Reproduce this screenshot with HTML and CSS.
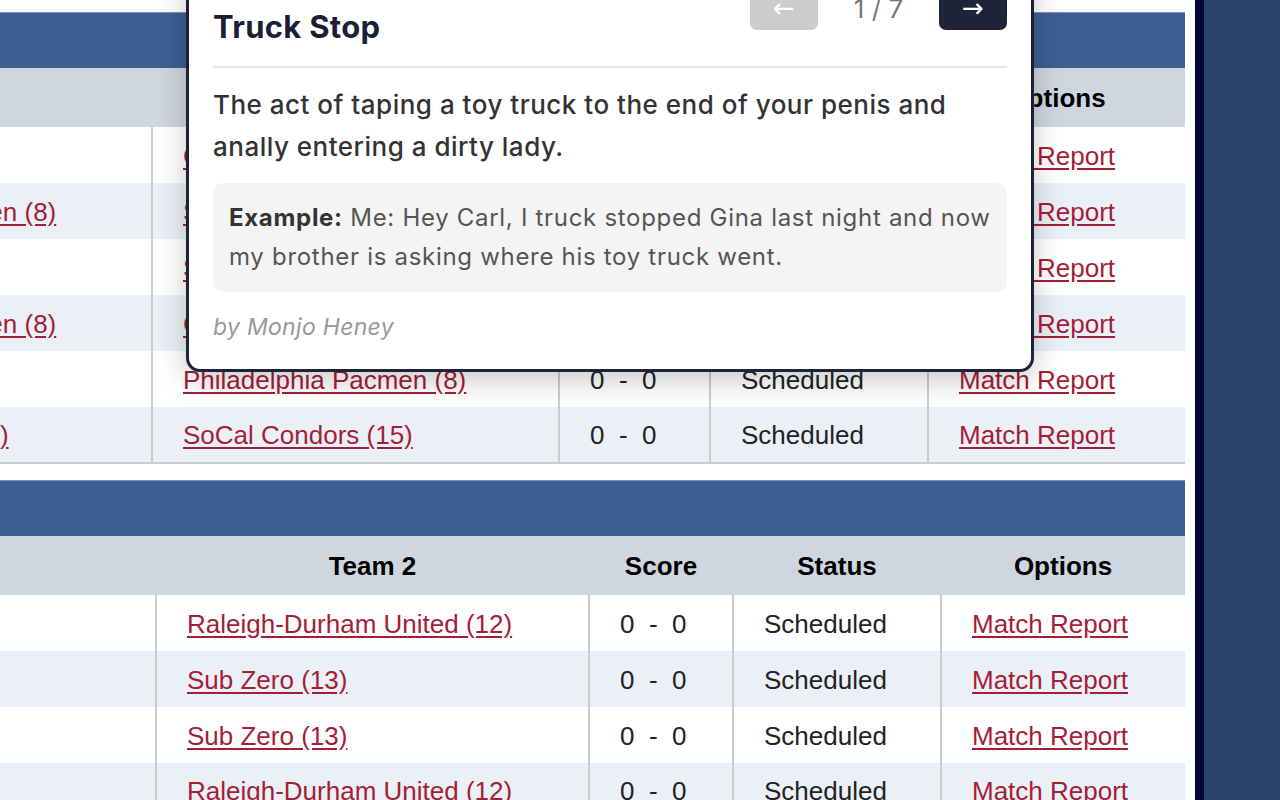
FILE: index.html
```html
<!DOCTYPE html>
<html lang="en">
<head>
<meta charset="utf-8">
<title>Schedule</title>
<link rel="stylesheet" href="styles.css">
</head>
<body>
<div class="page">
  <div class="main">
    <div class="content">
      <section class="round">
        <div class="bar"></div>
        <table class="sched sched-a">
          <colgroup><col class="c1"><col class="c2"><col class="c3"><col class="c4"><col class="c5"></colgroup>
          <thead>
            <tr><th>Team 1</th><th>Team 2</th><th>Score</th><th>Status</th><th>Options</th></tr>
          </thead>
          <tbody>
            <tr><td><a href="#">Sub Zero (13)</a></td><td><a href="#">Chicago Cyclones (10)</a></td><td>0 &nbsp;-&nbsp; 0</td><td>Scheduled</td><td><a href="#">Match Report</a></td></tr>
            <tr class="alt"><td><a href="#">Philadelphia Pacmen (8)</a></td><td><a href="#">Sub Zero (13)</a></td><td>0 &nbsp;-&nbsp; 0</td><td>Scheduled</td><td><a href="#">Match Report</a></td></tr>
            <tr><td><a href="#">Sub Zero (13)</a></td><td><a href="#">SoCal Condors (15)</a></td><td>0 &nbsp;-&nbsp; 0</td><td>Scheduled</td><td><a href="#">Match Report</a></td></tr>
            <tr class="alt"><td><a href="#">Philadelphia Pacmen (8)</a></td><td><a href="#">Chicago Cyclones (10)</a></td><td>0 &nbsp;-&nbsp; 0</td><td>Scheduled</td><td><a href="#">Match Report</a></td></tr>
            <tr><td><a href="#">Sub Zero (13)</a></td><td><a href="#">Philadelphia Pacmen (8)</a></td><td>0 &nbsp;-&nbsp; 0</td><td>Scheduled</td><td><a href="#">Match Report</a></td></tr>
            <tr class="alt"><td><a href="#">Atlanta Ambush (14)</a></td><td><a href="#">SoCal Condors (15)</a></td><td>0 &nbsp;-&nbsp; 0</td><td>Scheduled</td><td><a href="#">Match Report</a></td></tr>
          </tbody>
        </table>
      </section>
      <section class="round">
        <div class="bar"></div>
        <table class="sched sched-b">
          <colgroup><col class="c1"><col class="c2"><col class="c3"><col class="c4"><col class="c5"></colgroup>
          <thead>
            <tr><th>Team 1</th><th>Team 2</th><th>Score</th><th>Status</th><th>Options</th></tr>
          </thead>
          <tbody>
            <tr><td><a href="#">Sub Zero (13)</a></td><td><a href="#">Raleigh-Durham United (12)</a></td><td>0 &nbsp;-&nbsp; 0</td><td>Scheduled</td><td><a href="#">Match Report</a></td></tr>
            <tr class="alt"><td><a href="#">Austin (11)</a></td><td><a href="#">Sub Zero (13)</a></td><td>0 &nbsp;-&nbsp; 0</td><td>Scheduled</td><td><a href="#">Match Report</a></td></tr>
            <tr><td><a href="#">Austin (11)</a></td><td><a href="#">Sub Zero (13)</a></td><td>0 &nbsp;-&nbsp; 0</td><td>Scheduled</td><td><a href="#">Match Report</a></td></tr>
            <tr class="alt"><td><a href="#">Sub Zero (13)</a></td><td><a href="#">Raleigh-Durham United (12)</a></td><td>0 &nbsp;-&nbsp; 0</td><td>Scheduled</td><td><a href="#">Match Report</a></td></tr>
          </tbody>
        </table>
      </section>
    </div>
  </div>
  <div class="stripe"></div>
  <div class="side"></div>

  <div class="popup">
    <div class="pop-head">
      <h2 class="pop-title">Truck Stop</h2>
      <div class="pop-nav">
        <button class="nav-btn nav-prev" type="button">&larr;</button>
        <span class="nav-count">1 / 7</span>
        <button class="nav-btn nav-next" type="button">&rarr;</button>
      </div>
    </div>
    <p class="pop-def">The act of taping a toy truck to the end of your penis and anally entering a dirty lady.</p>
    <div class="pop-example"><strong>Example:</strong> Me: Hey Carl, I truck stopped Gina last night and now my brother is asking where his toy truck went.</div>
    <p class="pop-author">by Monjo Heney</p>
  </div>
</div>
</body>
</html>
```

FILE: styles.css
```css
* { box-sizing: border-box; }
html, body { margin: 0; padding: 0; }
body {
  width: 1280px;
  height: 800px;
  overflow: hidden;
  background: #fff;
  font-family: "Liberation Sans", Arial, sans-serif;
}
.page {
  position: relative;
  display: flex;
  width: 1280px;
  height: 800px;
}
.main {
  flex: 0 0 1195px;
  overflow: hidden;
  background: #fff;
}
.content {
  width: 1442px;
  margin-left: -257px;
  padding-top: 12px;
}
.stripe {
  flex: 0 0 9px;
  background: #05053a;
}
.side {
  flex: 1 1 auto;
  background: #2a4269;
}

.round { margin-bottom: 16px; }
.bar {
  height: 56px;
  background: #3e5f93;
  border-top: 1px solid #7d93b8;
}
.sched {
  width: 1442px;
  table-layout: fixed;
  border-collapse: collapse;
  font-size: 26px;
  color: #222;
  border-bottom: 2px solid #cdcdcd;
}
.sched-a .c1 { width: 409px; }
.sched-a .c2 { width: 407px; }
.sched-a .c3 { width: 151px; }
.sched-a .c4 { width: 218px; }
.sched-a .c5 { width: 257px; }
.sched-b .c1 { width: 413px; }
.sched-b .c2 { width: 433px; }
.sched-b .c3 { width: 144px; }
.sched-b .c4 { width: 208px; }
.sched-b .c5 { width: 244px; }

.sched th {
  height: 59px;
  padding: 2px 0 0;
  background: #cfd6df;
  color: #000;
  font-weight: bold;
  text-align: center;
  white-space: nowrap;
}
.sched td {
  height: 56px;
  padding: 2px 0 0 30px;
  text-align: left;
  white-space: nowrap;
  overflow: hidden;
  border-left: 2px solid #cccccc;
}
.sched td:first-child { border-left: none; }
.sched tr.alt td { background: #ebf0f7; }
.sched a {
  color: #a51d36;
  text-decoration: underline;
  text-underline-offset: 3px;
}

.popup {
  position: absolute;
  left: 186px;
  top: -40px;
  width: 848px;
  background: #fff;
  border: 3px solid #1e2438;
  border-radius: 14px;
  padding: 23px 24px 24px;
  box-shadow: 0 8px 30px rgba(0, 0, 0, 0.22);
  font-family: Inter, "Noto Sans", sans-serif;
}
.pop-head {
  display: flex;
  justify-content: space-between;
  align-items: flex-start;
  padding-bottom: 19px;
  border-bottom: 2px solid #e6e6e6;
}
.pop-title {
  margin: 21px 0 0;
  font-size: 31px;
  line-height: 40px;
  font-weight: 700;
  letter-spacing: 0.3px;
  color: #1a1f36;
}
.pop-nav {
  display: flex;
  align-items: center;
}
.nav-btn {
  width: 68px;
  height: 44px;
  border: none;
  border-radius: 7px;
  color: #fff;
  font-size: 26px;
  line-height: 44px;
  padding: 0;
  font-family: "DejaVu Sans", sans-serif;
}
.nav-prev { background: #cccccc; }
.nav-next { background: #1e2438; }
.nav-count {
  width: 121px;
  text-align: center;
  font-size: 26px;
  color: #777;
}
.pop-def {
  margin: 16px 0 0;
  font-size: 26px;
  line-height: 42px;
  font-weight: 500;
  letter-spacing: 0.5px;
  color: #333;
}
.pop-example {
  margin-top: 15px;
  background: #f4f4f4;
  border-radius: 10px;
  padding: 16px;
  font-size: 24px;
  line-height: 38.5px;
  letter-spacing: 0.7px;
  color: #555;
}
.pop-example strong { color: #333; font-weight: 700; }
.pop-author {
  margin: 18px 0 0;
  font-size: 23px;
  line-height: 35px;
  font-style: italic;
  letter-spacing: 0.3px;
  color: #999;
}
```
